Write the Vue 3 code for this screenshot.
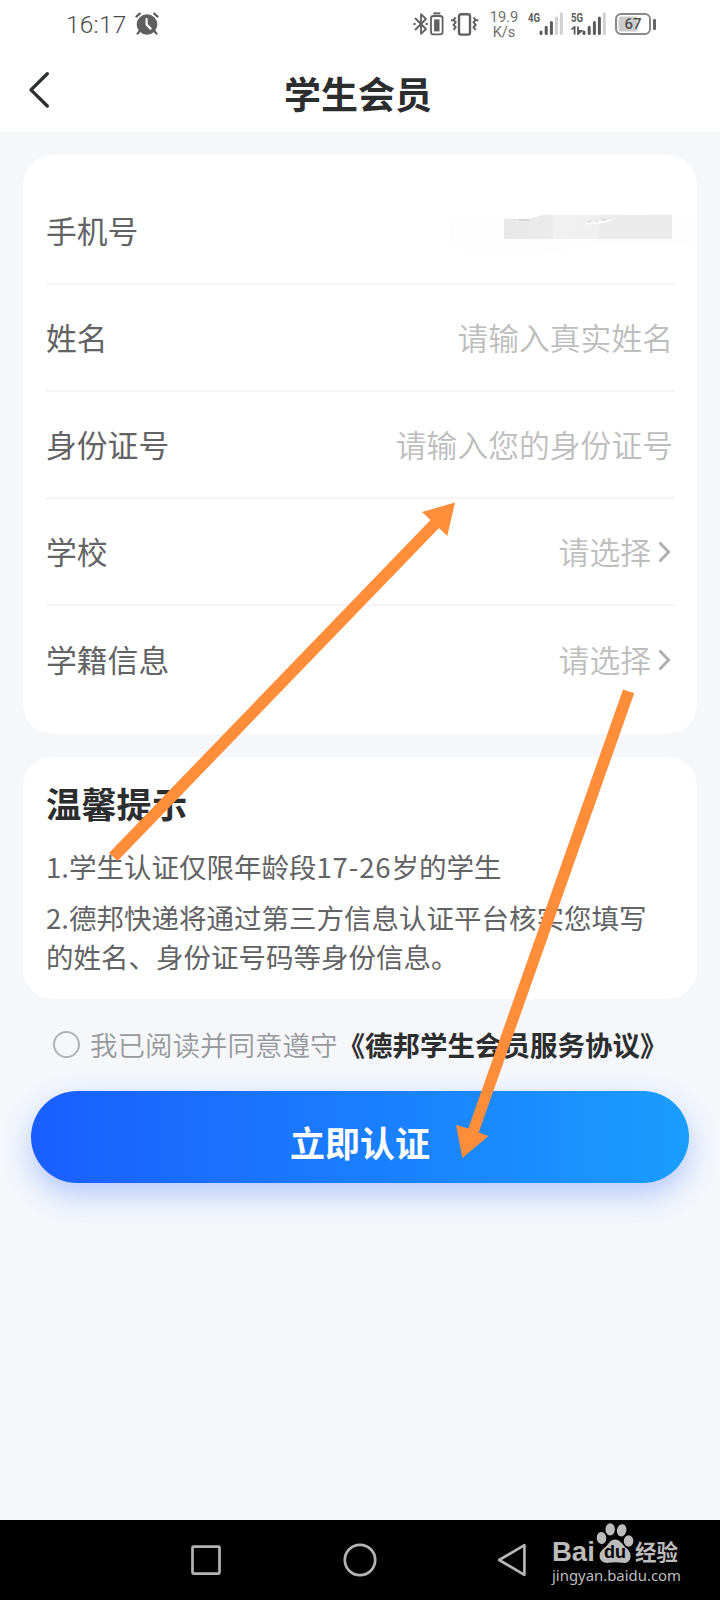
<script setup>
const rows = [
  { label: '手机号', masked: true },
  { label: '姓名', value: '请输入真实姓名' },
  { label: '身份证号', value: '请输入您的身份证号' },
  { label: '学校', value: '请选择', select: true },
  { label: '学籍信息', value: '请选择', select: true },
]
</script>

<template>
  <div class="screen">
    <header class="top">
      <div class="status">
        <span class="time">16:17</span>
        <svg class="alarm" width="24" height="24" viewBox="0 0 24 24">
          <circle cx="12" cy="12.5" r="10.3" fill="#5f5f5f" />
          <path d="M1 5L5.2 1.4M23 5L18.8 1.4" stroke="#fff" stroke-width="5" />
          <path d="M1.4 4.6L4.8 1.6M22.6 4.6L19.2 1.6M4.6 19L2.6 21.6M19.4 19L21.4 21.6" stroke="#5f5f5f" stroke-width="2.2" stroke-linecap="round" />
          <path d="M11.6 7.2V12.6L15.6 16.6" fill="none" stroke="#fff" stroke-width="2.2" stroke-linecap="round" />
        </svg>
        <svg class="devices" width="68" height="26" viewBox="0 0 68 26" fill="none" stroke="#606060" stroke-width="1.8">
          <path d="M2 7L13 18L8 22.8V3.2L13 8L2 19" stroke-linejoin="round" />
          <path d="M0.4 13H2.6M12.6 13H14.8" />
          <path d="M20.3 2.4H27.3" stroke-width="2" />
          <rect x="18" y="5" width="11.6" height="18.4" rx="2.4" />
          <rect x="21.1" y="8.4" width="5.4" height="12" fill="#606060" stroke="none" />
          <rect x="46" y="3.2" width="11" height="20.4" rx="2" stroke-width="2.4" />
          <path d="M42.6 6.4L40.6 9L42.6 11.4L40.6 14L42.6 16.4L40.6 19M60.6 6.4L62.6 9L60.6 11.4L62.6 14L60.6 16.4L62.6 19M39.2 8.4L38.6 10.2M64 8.4L64.6 10.2" stroke-width="2" />
        </svg>
        <span class="speed"><span>19.9</span><span>K/s</span></span>
        <span class="signal">
          <b>4G</b>
          <svg width="24" height="24" viewBox="0 0 24 24">
            <path d="M2 20V21.5M7.2 15.3V21.5M12.4 10.5V21.5" stroke="#5a5a5a" stroke-width="3" stroke-linecap="round" />
            <path d="M17.4 6V21.5M22.3 1.7V21.5" stroke="#d0d0d0" stroke-width="3" stroke-linecap="round" />
          </svg>
        </span>
        <span class="signal second">
          <b>5G</b>
          <svg class="traffic" width="12" height="9" viewBox="0 0 12 9">
            <path d="M.5 3.4L3.6 1V8.5M7 .5V8L10.4 5H7" fill="none" stroke="#5a5a5a" stroke-width="1.8" />
          </svg>
          <svg width="24" height="24" viewBox="0 0 24 24">
            <path d="M2 20V21.5M7.2 15.3V21.5M12.4 10.5V21.5M17.4 6V21.5" stroke="#5a5a5a" stroke-width="3" stroke-linecap="round" />
            <path d="M22.3 1.7V21.5" stroke="#d0d0d0" stroke-width="3" stroke-linecap="round" />
          </svg>
        </span>
        <span class="battery"><i>67</i></span>
        <span class="cap"></span>
      </div>
      <div class="titlebar">
        <svg class="back" width="24" height="38" viewBox="0 0 24 38">
          <path d="M20.3 2.8L4 18.9L20.3 35" fill="none" stroke="#2e2f30" stroke-width="3.4" stroke-linecap="round" stroke-linejoin="round" />
        </svg>
        <h1>学生会员</h1>
      </div>
    </header>

    <section class="card form">
      <div v-for="row in rows" :key="row.label" class="row">
        <span class="label">{{ row.label }}</span>
        <svg v-if="row.masked" class="mask" width="242" height="60" viewBox="0 0 242 60">
          <defs>
            <linearGradient id="smear"><stop offset="0" stop-color="#e8e8e8" /><stop offset=".28" stop-color="#ebebeb" /><stop offset=".3" stop-color="#f1f1f1" /><stop offset=".56" stop-color="#f0f0f0" /><stop offset=".58" stop-color="#ebebeb" /><stop offset="1" stop-color="#ebebeb" /></linearGradient>
          </defs>
          <path d="M0 14Q60 16 98 10T240 12V40H210Q160 36 110 47T14 50L18 42H0Z" fill="#fdfdfd" />
          <path d="M54 15H76Q84 14 92 11H222V35H54Z" fill="url(#smear)" />
          <path d="M69 16H79" stroke="#c6c6c6" />
          <path d="M134 20Q149 16 165 15L157 18Q146 21 134 20Z" fill="#fff" />
          <path d="M138 18L141 17M146 18L148 16M152 16H156" stroke="#c6c6c6" />
        </svg>
        <span v-else class="value">{{ row.value }}</span>
        <svg v-if="row.select" class="chevron" width="14" height="22" viewBox="0 0 14 22">
          <path d="M1.5 1.4L10.6 11L1.5 20.6" fill="none" stroke="#b0b0b2" stroke-width="2.9" />
        </svg>
      </div>
    </section>

    <section class="card tips">
      <h2>温馨提示</h2>
      <p>1.学生认证仅限年龄段<span class="range">17-26</span>岁的学生</p>
      <p>2.德邦快递将通过第三方信息认证平台核实您填写<br />的姓名、身份证号码等身份信息。</p>
    </section>

    <div class="agree">
      <span class="radio"></span>
      <span class="read">我已阅读并同意遵守</span>
      <span class="terms">《德邦学生会员服务协议》</span>
    </div>

    <button class="submit">立即认证</button>

    <footer class="nav">
      <svg class="keys" width="340" height="36" viewBox="0 0 340 36" fill="none" stroke="#b4b4b4" stroke-width="2.7" stroke-linejoin="round">
        <rect x="2.5" y="4.6" width="27" height="27" rx="1" />
        <circle cx="170" cy="18" r="15.2" />
        <path d="M309.2 18L334.4 3.2V32.8Z" />
      </svg>
      <div class="brand">
        <div class="logo">
          <span class="bai">Bai</span>
          <span class="paw">
            <svg width="40" height="42" viewBox="0 0 40 42" fill="#bcbcbc">
              <ellipse cx="6.5" cy="16" rx="4.8" ry="6" transform="rotate(-8 6.5 16)" />
              <ellipse cx="15.2" cy="7.4" rx="4.7" ry="6.2" />
              <ellipse cx="26.7" cy="8.3" rx="4.7" ry="6.2" transform="rotate(12 26.7 8.3)" />
              <ellipse cx="33.6" cy="19" rx="4.8" ry="5.8" />
              <path d="M20 17.5C25 17.5 27 22 30 25C34 28 36 31 35.5 35C35 40 31 41.5 27 40.8C22 40 19 40 14 40.8C9 41.5 5 39 4.6 34.5C4.4 30 7 28 10.5 25C14 22 15 17.5 20 17.5Z" />
            </svg>
            <span class="du">du</span>
          </span>
          <span class="jy">经验</span>
        </div>
        <div class="url">jingyan.baidu.com</div>
      </div>
    </footer>

    <svg class="arrows" width="720" height="1600" viewBox="0 0 720 1600" fill="#ff8d3a">
      <path d="M455 502.5L447.3 536L439 528L117.5 861L109 853L430.5 520L422 512Z" />
      <path d="M462.3 1158L456 1125L468.3 1128.5L623 689.5L634.2 693.3L478.7 1132.5L488.5 1136Z" />
    </svg>
  </div>
</template>

<style>
body {
  margin: 0;
  background: #f5f7fb;
}
</style>

<style scoped>
.screen {
  position: relative;
  width: 720px;
  height: 1600px;
  overflow: hidden;
  display: flex;
  flex-direction: column;
  background: #f5f7fb;
  font-family: "Noto Sans CJK SC", sans-serif;
  color: #626364;
}
.top {
  height: 132px;
  background: #fff;
}
.status {
  display: flex;
  align-items: center;
  height: 48px;
  padding-left: 66px;
}
.time {
  width: 69px;
  padding-top: 2px;
  font: 300 24.5px/48px Roboto, sans-serif;
  letter-spacing: 0.2px;
  color: #4c4c4c;
  white-space: nowrap;
}
.devices {
  margin-left: 254px;
}
.speed {
  width: 38px;
  margin: 1px 2px 0 4px;
  display: flex;
  flex-direction: column;
  align-items: center;
  font: 400 14.6px/15px Roboto, sans-serif;
  color: #707070;
}
.signal {
  position: relative;
  width: 35px;
  height: 24px;
  margin-left: 3px;
  display: flex;
  justify-content: flex-end;
}
.signal b {
  position: absolute;
  left: 0;
  top: 0;
  font: 700 12px/12px Roboto, sans-serif;
  transform: scaleX(0.8);
  transform-origin: left;
  color: #5c5c5c;
}
.second {
  margin-left: 8px;
}
.traffic {
  position: absolute;
  left: 0;
  bottom: 1px;
}
.battery {
  box-sizing: border-box;
  width: 36px;
  height: 22px;
  margin-left: 9px;
  border: 2.5px solid #888;
  border-radius: 6px;
  box-shadow: inset 0 0 0 1.5px #fff;
  background: linear-gradient(90deg, #ccc 62%, #fff 62%);
  text-align: center;
}
.battery i {
  display: block;
  font: normal 500 15px/18px Roboto, sans-serif;
  color: #505050;
}
.cap {
  width: 3px;
  height: 11px;
  margin-left: 2px;
  border-radius: 1px;
  background: #666;
}
.titlebar {
  display: flex;
  align-items: center;
  height: 84px;
}
.back {
  margin: 0 0 0 27px;
}
h1 {
  margin: 5px 0 0 233px;
  font-size: 37px;
  line-height: 54px;
  font-weight: 700;
  color: #2c2d2e;
}
.card {
  box-sizing: border-box;
  width: 674px;
  margin-left: 23px;
  background: #fff;
  border-radius: 30px;
}
.form {
  height: 579px;
  margin-top: 23px;
  padding: 23px 22px 0 23px;
}
.row {
  box-sizing: border-box;
  display: flex;
  align-items: center;
  justify-content: flex-end;
  height: 107px;
  border-bottom: 2px solid #f5f5f6;
  font-size: 30.8px;
}
.row:last-child {
  border-bottom: 0;
}
.label {
  margin: -3px auto 0 0;
}
.value {
  margin: -3px 2px 0 0;
  font-weight: 350;
  color: #bdbdbd;
}
.mask {
  margin: 6px -17px 0 0;
}
.chevron {
  margin: 1px 3px 0 5px;
}
.tips {
  height: 242px;
  margin-top: 23px;
  padding: 20px 23px 0;
}
h2 {
  margin: 0 0 18px;
  font-size: 35.3px;
  line-height: 52px;
  font-weight: 700;
  color: #2c2d2e;
}
p {
  margin: 0 0 12px;
  font-size: 27.5px;
  line-height: 39px;
  white-space: nowrap;
}
.range {
  letter-spacing: 0.9px;
}
.agree {
  display: flex;
  align-items: center;
  height: 40px;
  margin: 25px 0 0 53px;
  font-size: 27.5px;
  white-space: nowrap;
}
.radio {
  box-sizing: border-box;
  width: 27px;
  height: 27px;
  margin-top: 1px;
  border: 2px solid #b2b3b5;
  border-radius: 50%;
}
.read {
  margin-left: 10px;
  font-weight: 350;
  color: #98999b;
}
.terms {
  font-weight: 700;
  color: #2c2d2e;
}
.submit {
  width: 658px;
  height: 92px;
  margin: 27px 0 0 31px;
  padding: 10px 0 0;
  border: 0;
  border-radius: 46px;
  background: linear-gradient(90deg, #1a5eff, #1a9dff);
  box-shadow: 0 12px 30px rgba(26, 94, 255, 0.3);
  font: 700 35px/50px "Noto Sans CJK SC", sans-serif;
  color: #fff;
}
.nav {
  display: flex;
  height: 80px;
  margin-top: auto;
  background: #000;
}
.keys {
  flex: none;
  margin: 22px 0 0 190px;
}
.brand {
  margin: 2px 0 0 22px;
  color: #bcbcbc;
}
.logo {
  display: flex;
  height: 43px;
}
.bai {
  width: 43px;
  padding-top: 16px;
  font: 700 27.5px/28px "Liberation Sans", sans-serif;
}
.paw {
  position: relative;
  width: 40px;
}
.du {
  position: absolute;
  left: 9px;
  top: 20px;
  font: 700 18px/20px "Liberation Sans", sans-serif;
  color: #000;
}
.jy {
  padding-top: 17px;
  font-size: 21.5px;
  line-height: 24px;
  font-weight: 700;
}
.url {
  font: 400 14.9px/20px "Noto Sans", sans-serif;
}
.arrows {
  position: absolute;
  left: 0;
  top: 0;
  pointer-events: none;
}
</style>
